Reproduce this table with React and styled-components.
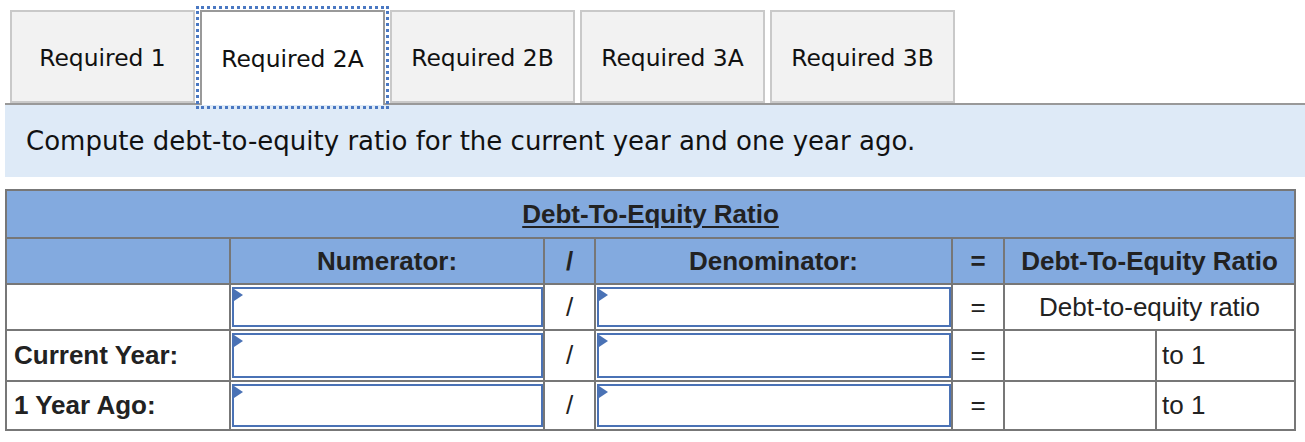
import React from 'react'
import styled, { createGlobalStyle } from 'styled-components'

const GlobalStyle = createGlobalStyle`
  html, body {
    margin: 0;
    padding: 0;
    background: #fff;
  }
`

const Page = styled.div`
  padding: 0 0 0 5px;
  width: 1300px;
`

const TabList = styled.div`
  display: flex;
  align-items: flex-end;
  padding: 10px 0 0 5px;
  border-bottom: 2px solid #999;
  height: 93px;
`

const Tab = styled.div`
  box-sizing: border-box;
  width: 185px;
  height: ${p => (p.$active ? '95px' : '93px')};
  margin-right: 5px;
  margin-bottom: ${p => (p.$active ? '-2px' : '0')};
  display: flex;
  align-items: center;
  justify-content: center;
  background: ${p => (p.$active ? '#fff' : '#f2f2f2')};
  border: 2px solid ${p => (p.$active ? '#999' : '#c9c9c9')};
  border-bottom: ${p => (p.$active ? 'none' : '2px solid #c9c9c9')};
  outline: ${p => (p.$active ? '3px dotted #4a78c2' : 'none')};
  outline-offset: 1px;
  font-family: "DejaVu Sans", Verdana, sans-serif;
  font-size: 23.4px;
  color: #111;
  padding-top: ${p => (p.$active ? '0' : '3px')};
`

const Instruction = styled.div`
  height: 72px;
  display: flex;
  align-items: center;
  padding-left: 21px;
  background: #deeaf7;
  font-family: "DejaVu Sans", Verdana, sans-serif;
  font-size: 26px;
  color: #111;
`

const Table = styled.table`
  margin-top: 12px;
  width: 1289px;
  table-layout: fixed;
  border-collapse: collapse;
  font-family: "Liberation Sans", Arial, sans-serif;
  font-size: 26px;
  color: #222;
`

const Th = styled.th`
  border: 2px solid #777;
  background: #83aadf;
  font-weight: 700;
  text-align: center;
  padding: 0;
  height: ${p => p.$h || 45}px;
  text-decoration: ${p => (p.$underline ? 'underline' : 'none')};
  text-underline-offset: 3px;
  text-decoration-thickness: 2px;
`

const Td = styled.td`
  border: 2px solid #777;
  background: #fff;
  padding: ${p => (p.$pad ? `0 ${p.$pad}px` : '0')};
  text-align: ${p => p.$align || 'center'};
  font-weight: ${p => (p.$bold ? 700 : 400)};
  height: ${p => p.$h || 46}px;
  white-space: nowrap;
`

const InputCell = styled.td`
  border: 2px solid #777;
  padding: 1px 0 1px 1px;
  height: ${p => p.$h || 46}px;
`

const InputBox = styled.div`
  position: relative;
  box-sizing: border-box;
  height: ${p => p.$h || 42}px;
  border: 2px solid #4a72b5;
  background: #fff;

  &::before {
    content: '';
    position: absolute;
    left: 0;
    top: 0;
    border-top: 6px solid transparent;
    border-bottom: 6px solid transparent;
    border-left: 9px solid #4a72b5;
  }
`

const tabs = ['Required 1', 'Required 2A', 'Required 2B', 'Required 3A', 'Required 3B']

const rows = [
  { label: '', h: 42, ratio: 'Debt-to-equity ratio' },
  { label: 'Current Year:', h: 47 },
  { label: '1 Year Ago:', h: 45 },
]

export default function App() {
  return (
    <Page>
      <GlobalStyle />
      <TabList>
        {tabs.map(t => (
          <Tab key={t} $active={t === 'Required 2A'}>{t}</Tab>
        ))}
      </TabList>
      <Instruction>Compute debt-to-equity ratio for the current year and one year ago.</Instruction>

      <Table>
        <colgroup>
          <col style={{ width: 224 }} />
          <col style={{ width: 314 }} />
          <col style={{ width: 51 }} />
          <col style={{ width: 357 }} />
          <col style={{ width: 52 }} />
          <col style={{ width: 152 }} />
          <col style={{ width: 139 }} />
        </colgroup>
        <thead>
          <tr>
            <Th colSpan={7} $h={46} $underline>Debt-To-Equity Ratio</Th>
          </tr>
          <tr>
            <Th $h={44}></Th>
            <Th $h={44}>Numerator:</Th>
            <Th $h={44}>/</Th>
            <Th $h={44}>Denominator:</Th>
            <Th $h={44}>=</Th>
            <Th $h={44} colSpan={2}>Debt-To-Equity Ratio</Th>
          </tr>
        </thead>
        <tbody>
          {rows.map((r, i) => (
            <tr key={i}>
              <Td $h={r.h} $align="left" $bold $pad={7}>{r.label}</Td>
              <InputCell $h={r.h}><InputBox $h={r.h - 2} /></InputCell>
              <Td $h={r.h}>/</Td>
              <InputCell $h={r.h}><InputBox $h={r.h - 2} /></InputCell>
              <Td $h={r.h}>=</Td>
              {r.ratio ? (
                <Td $h={r.h} colSpan={2}>{r.ratio}</Td>
              ) : (
                <>
                  <Td $h={r.h}></Td>
                  <Td $h={r.h} $align="left" $pad={5}>to 1</Td>
                </>
              )}
            </tr>
          ))}
        </tbody>
      </Table>
    </Page>
  )
}
